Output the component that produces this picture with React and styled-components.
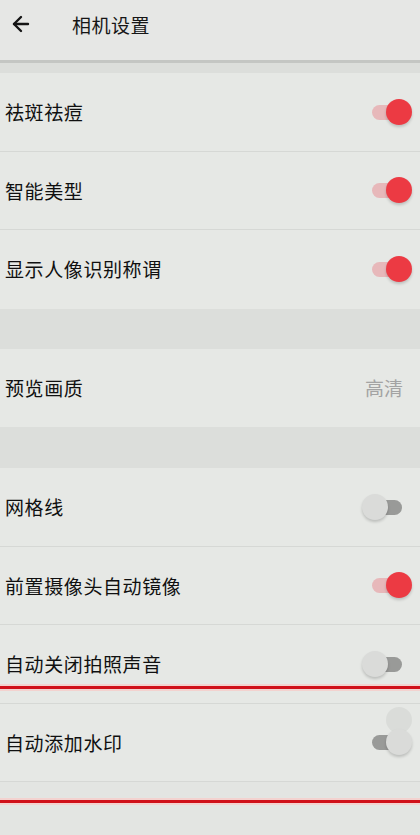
import React from "react";
import styled, { createGlobalStyle } from "styled-components";
import { ArrowLeft } from "lucide-react";

const GlobalStyle = createGlobalStyle`
  html, body {
    margin: 0;
    padding: 0;
    background: #e3e5e2;
  }
  body {
    font-family: "Noto Sans CJK SC", "Noto Sans", sans-serif;
  }
`;

const Page = styled.div`
  width: 420px;
  min-height: 835px;
  background: #e3e5e2;
  overflow: hidden;
`;

const Header = styled.div`
  height: 60px;
  display: flex;
  align-items: center;
  padding-left: 8px;
  background: #e6e7e5;
  border-bottom: 3px solid #c4c6c3;
  box-shadow: 0 1px 2px rgba(0, 0, 0, 0.08);
`;

const BackButton = styled.div`
  width: 26px;
  height: 26px;
  display: flex;
  align-items: center;
  justify-content: center;
  margin-top: -12px;
  color: #151515;
`;

const Title = styled.div`
  margin-left: 38px;
  margin-top: -12px;
  font-size: 19px;
  color: #161616;
  letter-spacing: 0.5px;
`;

const Gap = styled.div`
  height: ${(p) => p.h}px;
  background: #dcdedb;
`;

const Group = styled.div`
  position: relative;
  background: #e6e8e5;
`;

const Row = styled.div`
  height: 77.5px;
  display: flex;
  align-items: center;
  justify-content: space-between;
  padding: 0 8px 0 5px;
  border-bottom: 1px solid ${(p) => (p.last ? "transparent" : "#d6d8d5")};
`;

const Label = styled.div`
  font-size: 19px;
  color: #101010;
  letter-spacing: 0.6px;
`;

const Value = styled.div`
  font-size: 19px;
  color: #a3a3a3;
  margin-right: 9px;
`;

const SwitchBox = styled.div`
  position: relative;
  width: 50px;
  height: 26px;
`;

const Track = styled.div`
  position: absolute;
  left: 10px;
  top: 6px;
  width: 30px;
  height: 15px;
  border-radius: 8px;
  background: ${(p) => (p.on ? "#e7b8ba" : "#999a98")};
`;

const Thumb = styled.div`
  position: absolute;
  top: 0;
  left: ${(p) => (p.right ? 24 : 0)}px;
  width: 26px;
  height: 26px;
  border-radius: 50%;
  background: ${(p) => (p.on ? "#ec3a43" : "#dadbd9")};
  box-shadow: 0 2px 3px rgba(0, 0, 0, 0.18);
`;

const Ghost = styled.div`
  position: absolute;
  top: -22px;
  left: 24px;
  width: 26px;
  height: 26px;
  border-radius: 50%;
  background: #dadcd9;
`;

const Highlight = styled.div`
  position: absolute;
  left: 0;
  right: 0;
  top: 218px;
  height: 111px;
  border-top: 3px solid #d01019;
  border-bottom: 3px solid #d01019;
  pointer-events: none;
  box-shadow: 0 -2px 0 #f3d2cf, 0 2px 0 #f3d2cf, inset 0 2px 0 #f3d2cf,
    inset 0 -2px 0 #f3d2cf;
`;

const Switch = ({ state }) => {
  const on = state === "on";
  const moving = state === "moving";
  return (
    <SwitchBox>
      {moving && <Ghost />}
      <Track on={on} />
      <Thumb on={on} right={on || moving} />
    </SwitchBox>
  );
};

const groups = [
  [
    { label: "祛斑祛痘", sw: "on" },
    { label: "智能美型", sw: "on" },
    { label: "显示人像识别称谓", sw: "on" },
  ],
  [{ label: "预览画质", value: "高清" }],
  [
    { label: "网格线", sw: "off" },
    { label: "前置摄像头自动镜像", sw: "on" },
    { label: "自动关闭拍照声音", sw: "off" },
    { label: "自动添加水印", sw: "moving" },
  ],
];

const gaps = [0, 40, 41];

const App = () => {
  return (
    <Page>
      <GlobalStyle />
      <Header>
        <BackButton>
          <ArrowLeft size={24} strokeWidth={2.4} />
        </BackButton>
        <Title>相机设置</Title>
      </Header>
      <Gap h={10} />
      {groups.map((items, gi) => (
        <React.Fragment key={gi}>
          {gi > 0 && <Gap h={gaps[gi]} />}
          <Group>
            {items.map((item, i) => (
              <Row key={item.label} last={gi < 2 && i === items.length - 1}>
                <Label>{item.label}</Label>
                {item.value ? <Value>{item.value}</Value> : <Switch state={item.sw} />}
              </Row>
            ))}
            {gi === 2 && <Highlight />}
          </Group>
        </React.Fragment>
      ))}
    </Page>
  );
};

export default App;
